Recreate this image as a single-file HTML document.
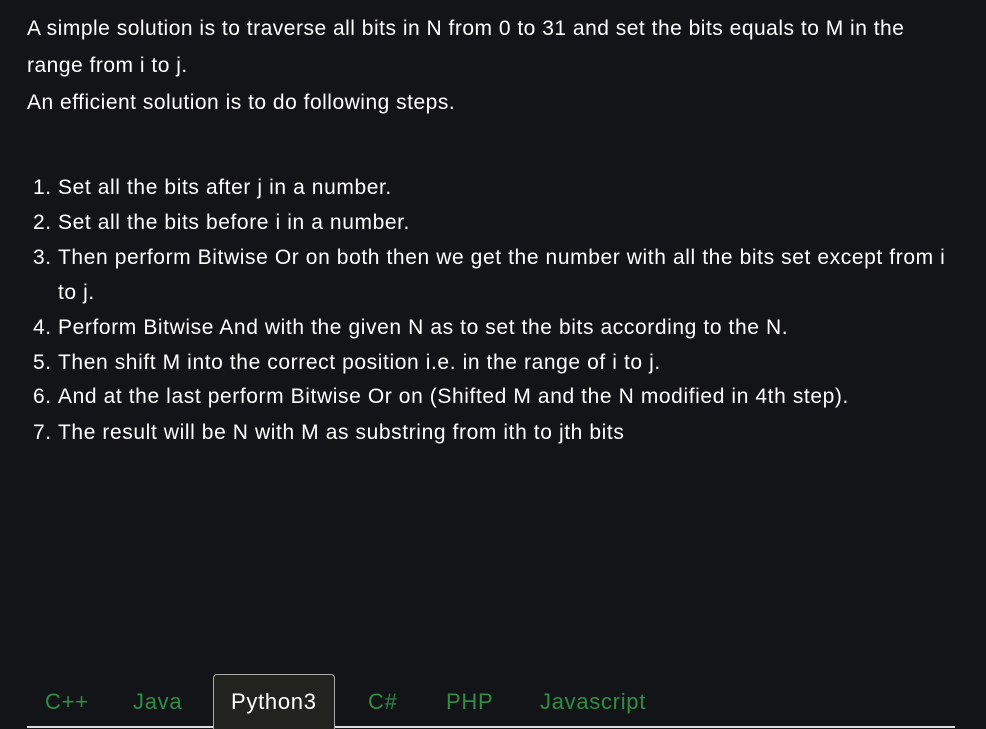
<!DOCTYPE html>
<html><head><style>
html,body{margin:0;padding:0;background:#131417;width:986px;height:729px;overflow:hidden;}
body{font-family:"Liberation Sans",sans-serif;color:#fff;font-size:21px;letter-spacing:0.5px;position:relative;}
p{margin:0;position:absolute;left:27px;white-space:nowrap;}
.li{position:absolute;white-space:nowrap;left:58px;letter-spacing:0.6px;}
.n{position:absolute;left:-25px;}
.tab{position:absolute;top:688px;font-family:"Liberation Sans Narrow","Liberation Sans",sans-serif;font-size:22px;letter-spacing:0.7px;color:#2f8d46;line-height:28px;}
</style></head><body>
<p style="top:17px">A simple solution is to traverse all bits in N from 0 to 31 and set the bits equals to M in the</p>
<p style="top:54px">range from i to j.</p>
<p style="top:91px">An efficient solution is to do following steps.</p>
<div class="li" style="top:176px"><span class="n">1.</span>Set all the bits after j in a number.</div>
<div class="li" style="top:211px"><span class="n">2.</span>Set all the bits before i in a number.</div>
<div class="li" style="top:246px"><span class="n">3.</span>Then perform Bitwise Or on both then we get the number with all the bits set except from i</div>
<div class="li" style="top:281px">to j.</div>
<div class="li" style="top:316px"><span class="n">4.</span>Perform Bitwise And with the given N as to set the bits according to the N.</div>
<div class="li" style="top:351px"><span class="n">5.</span>Then shift M into the correct position i.e. in the range of i to j.</div>
<div class="li" style="top:385px"><span class="n">6.</span>And at the last perform Bitwise Or on (Shifted M and the N modified in 4th step).</div>
<div class="li" style="top:421px"><span class="n">7.</span>The result will be N with M as substring from ith to jth bits</div>
<div style="position:absolute;left:27px;top:726px;width:928px;height:2px;background:#ddd;"></div>
<div style="position:absolute;left:269px;top:726px;width:28px;height:3px;background:#555;"></div>
<div style="position:absolute;left:213px;top:674px;width:120px;height:56px;background:#22221f;border:1px solid #aaa;border-bottom:none;border-radius:4px 4px 0 0;"></div>
<div class="tab" style="left:45px">C++</div>
<div class="tab" style="left:133px">Java</div>
<div class="tab" style="left:231px;color:#fff">Python3</div>
<div class="tab" style="left:368px">C#</div>
<div class="tab" style="left:446px">PHP</div>
<div class="tab" style="left:540px">Javascript</div>
</body></html>
